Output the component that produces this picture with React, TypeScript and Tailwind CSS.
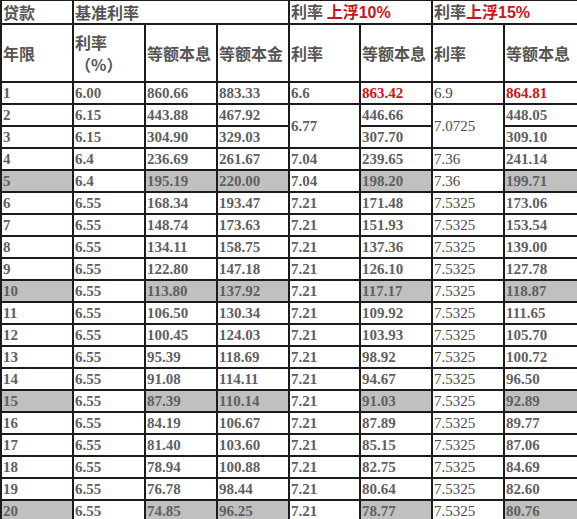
import React from "react";

type Row = {
  year: string;
  rate: string;
  equalPay: string;
  equalPrin: string;
  rate10?: string;
  pay10: string;
  rate15?: string;
  pay15: string;
  span?: boolean;
};

const ROWS: Row[] = [
  { year: "1", rate: "6.00", equalPay: "860.66", equalPrin: "883.33", rate10: "6.6", pay10: "863.42", rate15: "6.9", pay15: "864.81" },
  { year: "2", rate: "6.15", equalPay: "443.88", equalPrin: "467.92", rate10: "6.77", pay10: "446.66", rate15: "7.0725", pay15: "448.05", span: true },
  { year: "3", rate: "6.15", equalPay: "304.90", equalPrin: "329.03", pay10: "307.70", pay15: "309.10" },
  { year: "4", rate: "6.4", equalPay: "236.69", equalPrin: "261.67", rate10: "7.04", pay10: "239.65", rate15: "7.36", pay15: "241.14" },
  { year: "5", rate: "6.4", equalPay: "195.19", equalPrin: "220.00", rate10: "7.04", pay10: "198.20", rate15: "7.36", pay15: "199.71" },
  { year: "6", rate: "6.55", equalPay: "168.34", equalPrin: "193.47", rate10: "7.21", pay10: "171.48", rate15: "7.5325", pay15: "173.06" },
  { year: "7", rate: "6.55", equalPay: "148.74", equalPrin: "173.63", rate10: "7.21", pay10: "151.93", rate15: "7.5325", pay15: "153.54" },
  { year: "8", rate: "6.55", equalPay: "134.11", equalPrin: "158.75", rate10: "7.21", pay10: "137.36", rate15: "7.5325", pay15: "139.00" },
  { year: "9", rate: "6.55", equalPay: "122.80", equalPrin: "147.18", rate10: "7.21", pay10: "126.10", rate15: "7.5325", pay15: "127.78" },
  { year: "10", rate: "6.55", equalPay: "113.80", equalPrin: "137.92", rate10: "7.21", pay10: "117.17", rate15: "7.5325", pay15: "118.87" },
  { year: "11", rate: "6.55", equalPay: "106.50", equalPrin: "130.34", rate10: "7.21", pay10: "109.92", rate15: "7.5325", pay15: "111.65" },
  { year: "12", rate: "6.55", equalPay: "100.45", equalPrin: "124.03", rate10: "7.21", pay10: "103.93", rate15: "7.5325", pay15: "105.70" },
  { year: "13", rate: "6.55", equalPay: "95.39", equalPrin: "118.69", rate10: "7.21", pay10: "98.92", rate15: "7.5325", pay15: "100.72" },
  { year: "14", rate: "6.55", equalPay: "91.08", equalPrin: "114.11", rate10: "7.21", pay10: "94.67", rate15: "7.5325", pay15: "96.50" },
  { year: "15", rate: "6.55", equalPay: "87.39", equalPrin: "110.14", rate10: "7.21", pay10: "91.03", rate15: "7.5325", pay15: "92.89" },
  { year: "16", rate: "6.55", equalPay: "84.19", equalPrin: "106.67", rate10: "7.21", pay10: "87.89", rate15: "7.5325", pay15: "89.77" },
  { year: "17", rate: "6.55", equalPay: "81.40", equalPrin: "103.60", rate10: "7.21", pay10: "85.15", rate15: "7.5325", pay15: "87.06" },
  { year: "18", rate: "6.55", equalPay: "78.94", equalPrin: "100.88", rate10: "7.21", pay10: "82.75", rate15: "7.5325", pay15: "84.69" },
  { year: "19", rate: "6.55", equalPay: "76.78", equalPrin: "98.44", rate10: "7.21", pay10: "80.64", rate15: "7.5325", pay15: "82.60" },
  { year: "20", rate: "6.55", equalPay: "74.85", equalPrin: "96.25", rate10: "7.21", pay10: "78.77", rate15: "7.5325", pay15: "80.76" },
];

// shared cell styles
const cell = "border-2 border-[#1c1c1c] px-[1px] h-[22px] align-middle whitespace-nowrap text-left";
const cjk = "font-['Noto_Sans_CJK_SC',sans-serif] font-bold text-[16px] leading-[20px] text-[#555]";
const num = "font-['Liberation_Serif',serif] font-bold text-[15px] leading-[18px] text-[#5f5f5f]";
const numThin = "font-['Liberation_Serif',serif] font-normal text-[15px] leading-[18px] text-[#4a4a4a]";
const red = "text-[#c8161d]";

export default function App() {
  return (
    <div className="w-[577px] h-[519px] overflow-hidden bg-white">
      <table className="table-fixed border-collapse w-[580px] -mt-[1px]">
        <colgroup>
          <col className="w-[72px]" />
          <col className="w-[72px]" />
          <col className="w-[72px]" />
          <col className="w-[72px]" />
          <col className="w-[71px]" />
          <col className="w-[72px]" />
          <col className="w-[72px]" />
          <col className="w-[77px]" />
        </colgroup>
        <thead>
          <tr>
            <th className={`${cell} ${cjk}`}>贷款</th>
            <th colSpan={3} className={`${cell} ${cjk}`}>基准利率</th>
            <th colSpan={2} className={`${cell} ${cjk}`}>
              利率 <span className={red}>上浮<span className="font-['Liberation_Sans',sans-serif]">10%</span></span>
            </th>
            <th colSpan={2} className={`${cell} ${cjk}`}>
              利率<span className={red}>上浮<span className="font-['Liberation_Sans',sans-serif]">15%</span></span>
            </th>
          </tr>
          <tr>
            <th className={`${cell} ${cjk} h-[58px]`}>年限</th>
            <th className={`${cell} ${cjk} h-[58px]`}>
              <div className="leading-[22px]">利率</div>
              <div className="leading-[22px]">（%）</div>
            </th>
            <th className={`${cell} ${cjk} h-[58px]`}>等额本息</th>
            <th className={`${cell} ${cjk} h-[58px]`}>等额本金</th>
            <th className={`${cell} ${cjk} h-[58px]`}>利率</th>
            <th className={`${cell} ${cjk} h-[58px]`}>等额本息</th>
            <th className={`${cell} ${cjk} h-[58px]`}>利率</th>
            <th className={`${cell} ${cjk} h-[58px]`}>等额本息</th>
          </tr>
        </thead>
        <tbody>
          {ROWS.map((r, i) => {
            const shade = Number(r.year) % 5 === 0 ? "bg-[#c0c0c0]" : "";
            const first = i === 0;
            return (
              <tr key={r.year}>
                <td className={`${cell} ${num} ${shade}`}>{r.year}</td>
                <td className={`${cell} ${num}`}>{r.rate}</td>
                <td className={`${cell} ${num} ${shade}`}>{r.equalPay}</td>
                <td className={`${cell} ${num} ${shade}`}>{r.equalPrin}</td>
                {r.rate10 !== undefined && (
                  <td rowSpan={r.span ? 2 : 1} className={`${cell} ${num}`}>{r.rate10}</td>
                )}
                <td className={`${cell} ${num} ${shade} ${first ? red : ""}`}>{r.pay10}</td>
                {r.rate15 !== undefined && (
                  <td rowSpan={r.span ? 2 : 1} className={`${cell} ${numThin}`}>{r.rate15}</td>
                )}
                <td className={`${cell} ${num} ${shade} ${first ? red : ""}`}>{r.pay15}</td>
              </tr>
            );
          })}
        </tbody>
      </table>
    </div>
  );
}
